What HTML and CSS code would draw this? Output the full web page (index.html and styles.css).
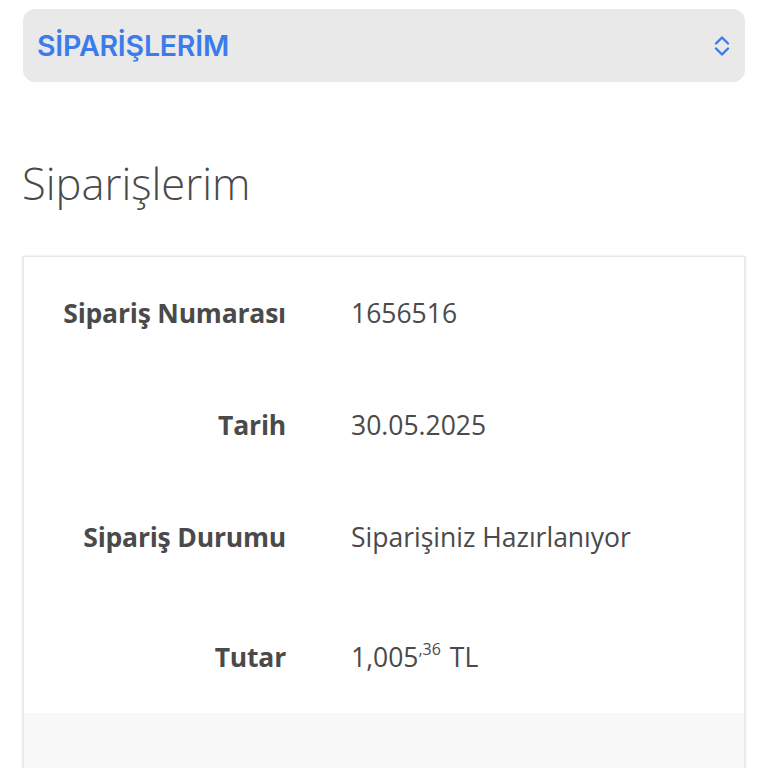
FILE: index.html
```html
<!DOCTYPE html>
<html lang="tr">
<head>
<meta charset="utf-8">
<title>Siparişlerim</title>
<link rel="stylesheet" href="styles.css">
</head>
<body>
<div class="page">
  <div class="selector">
    <span class="selector-text">SİPARİŞLERİM</span>
    <svg class="selector-icon" width="16" height="22" viewBox="0 0 16 22">
      <path d="M2 8.5 L8 2.5 L14 8.5" fill="none" stroke="#3b7cec" stroke-width="2.4" stroke-linecap="round" stroke-linejoin="round"/>
      <path d="M2 13.5 L8 19.5 L14 13.5" fill="none" stroke="#3b7cec" stroke-width="2.4" stroke-linecap="round" stroke-linejoin="round"/>
    </svg>
  </div>
  <h1 class="title">Siparişlerim</h1>
  <div class="card">
    <div class="row">
      <div class="label">Sipariş Numarası</div>
      <div class="value">1656516</div>
    </div>
    <div class="row">
      <div class="label">Tarih</div>
      <div class="value">30.05.2025</div>
    </div>
    <div class="row">
      <div class="label">Sipariş Durumu</div>
      <div class="value">Siparişiniz Hazırlanıyor</div>
    </div>
    <div class="row row-last">
      <div class="label">Tutar</div>
      <div class="value">1,005<sup class="cents">,36</sup> TL</div>
    </div>
    <div class="card-footer"></div>
  </div>
</div>
</body>
</html>
```

FILE: styles.css
```css
html, body {
  margin: 0;
  padding: 0;
  background: #ffffff;
}

body {
  font-family: "Open Sans", "Lato", sans-serif;
  color: #4a4a4a;
}

.page {
  padding: 9px 23px 0 23px;
}

.selector {
  height: 73px;
  background: #e9e9ea;
  border-radius: 12px;
  display: flex;
  align-items: center;
  justify-content: space-between;
  padding: 0 14px 0 14px;
}

.selector-text {
  font-family: "Inter", "Roboto", sans-serif;
  font-weight: 600;
  font-size: 28.5px;
  color: #3b7cec;
  letter-spacing: -0.2px;
}

.selector-icon {
  display: block;
  margin-right: 1px;
}

.title {
  margin: 76px 0 0 -1px;
  font-weight: 300;
  font-size: 43.5px;
  line-height: 52px;
  color: #4a4a4a;
}

.card {
  margin-top: 46px;
  border: 1px solid #e8e8e8;
  border-bottom: none;
  box-shadow: 1px 0 2px rgba(0,0,0,0.08), -1px 0 2px rgba(0,0,0,0.08);
  background: #ffffff;
}

.row {
  height: 112px;
  display: grid;
  grid-template-columns: 262px 1fr;
  column-gap: 65px;
  align-items: center;
  box-sizing: border-box;
}

.row-last {
  height: 120px;
  padding-top: 8px;
}

.label {
  text-align: right;
  font-weight: 700;
  font-size: 26.5px;
  color: #4a4a4a;
  letter-spacing: -0.2px;
}

.value {
  font-weight: 400;
  font-size: 26.5px;
  color: #4a4a4a;
}

.cents {
  font-size: 16px;
  vertical-align: 0;
  position: relative;
  top: -12px;
  margin-right: 2px;
}

.card-footer {
  height: 120px;
  background: #f8f8f8;
}
```
